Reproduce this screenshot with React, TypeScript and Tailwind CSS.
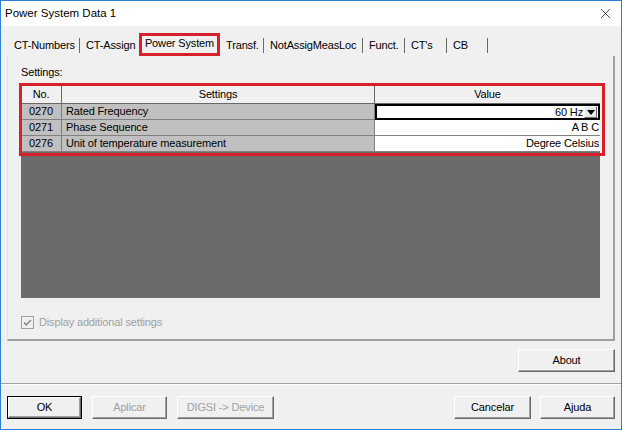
import { X } from 'lucide-react'

const tabs = [
  { label: 'CT-Numbers', w: 'w-[72px]' },
  { label: 'CT-Assign', w: 'w-[59px]', noSep: true },
  { label: 'Power System', w: 'w-[81px]', active: true },
  { label: 'Transf.', w: 'w-[44px]' },
  { label: 'NotAssigMeasLoc', w: 'w-[99px]' },
  { label: 'Funct.', w: 'w-[42px]' },
  { label: "CT's", w: 'w-[42px]' },
  { label: 'CB', w: 'w-[41px]' },
]

const rows = [
  { no: '0270', name: 'Rated Frequency', value: '60 Hz', dropdown: true },
  { no: '0271', name: 'Phase Sequence', value: 'A B C' },
  { no: '0276', name: 'Unit of temperature measurement', value: 'Degree Celsius' },
]

function Btn({ label, w, disabled, primary }: { label: string; w: string; disabled?: boolean; primary?: boolean }) {
  return (
    <div className={`${w} h-[23px] ${primary ? 'border border-black' : ''}`}>
      <div
        className={`flex h-full items-center justify-center border border-t-white border-l-white border-r-[#696969] border-b-[#696969] bg-[#f0f0f0] shadow-[inset_-1px_-1px_0_#a0a0a0] ${
          disabled ? 'text-[#a0a0a0]' : 'text-black'
        }`}
      >
        {label}
      </div>
    </div>
  )
}

export default function App() {
  return (
    <div className="flex h-[430px] w-[622px] flex-col border border-[#2d7fd6] bg-[#f0f0f0] font-['Liberation_Sans',Arial,sans-serif] text-[11px] tracking-[-0.15px] text-black">
      {/* Title bar */}
      <div className="flex h-[25px] shrink-0 items-center justify-between bg-white pl-[4px] pr-[7px]">
        <span className="text-[11.5px] tracking-normal">Power System Data 1</span>
        <X className="h-[17px] w-[17px]" strokeWidth={1} />
      </div>

      {/* Tabs */}
      <div className="mt-[7px] flex h-[23px] shrink-0 pl-[7px]">
        {tabs.map((t) =>
          t.active ? (
            <div key={t.label} className={`${t.w} flex items-center justify-center border-[3px] border-[#d6212b] pb-[2px]`}>
              {t.label}
            </div>
          ) : (
            <div key={t.label} className={`${t.w} flex items-center justify-between pl-[6px]`}>
              <span className="pt-[2px]">{t.label}</span>
              {!t.noSep && <span className="mt-[2px] h-[15px] w-px bg-[#696969]" />}
            </div>
          ),
        )}
      </div>

      {/* Tab panel */}
      <div className="mx-[6px] flex h-[285px] shrink-0 flex-col border-l border-l-[#e3e3e3] border-r-2 border-r-[#a0a0a0] border-b-2 border-b-[#a0a0a0] pl-[13px] pr-[13px]">
        <div className="mt-[10px] h-[13px] leading-[13px]">Settings:</div>

        {/* Grid */}
        <div className="relative mt-[7px] h-[212px] bg-[#6b6b6b]">
          <div className="flex h-[18px] bg-[#f0f0f0]">
            <div className="flex w-[41px] items-center justify-center border-r border-b border-[#696969]">No.</div>
            <div className="flex w-[313px] items-center justify-center border-r border-b border-[#696969]">Settings</div>
            <div className="flex flex-1 items-center justify-center border-b border-[#696969]">Value</div>
          </div>
          {rows.map((r) => (
            <div key={r.no} className="flex h-[16px]">
              <div className="flex w-[41px] items-center justify-center border-r border-b border-[#808080] bg-[#c0c0c0]">{r.no}</div>
              <div className="flex w-[313px] items-center border-r border-b border-[#808080] bg-[#c0c0c0] pl-[4px]">{r.name}</div>
              {r.dropdown ? (
                <div className="flex flex-1 items-center justify-end border-2 border-black bg-white pr-[1px]">
                  <span>{r.value}</span>
                  <span className="ml-[1px] flex h-[12px] w-[13px] items-center justify-center border border-t-white border-l-white border-r-[#696969] border-b-[#696969] bg-[#e8e8e8]">
                    <svg width="8" height="5" viewBox="0 0 8 5">
                      <path d="M0 0h8L4 5z" fill="black" />
                    </svg>
                  </span>
                </div>
              ) : (
                <div className="flex flex-1 items-center justify-end border-b border-[#808080] bg-white pr-[1px]">{r.value}</div>
              )}
            </div>
          ))}
          {/* annotation frame */}
          <div className="absolute top-[-3px] left-[-2px] right-[-5px] h-[73px] border-[3px] border-[#d6212b]" />
        </div>

        {/* Checkbox */}
        <div className="mt-[16px] flex items-center gap-[5px] text-[#a0a0a0]">
          <svg width="13" height="13" viewBox="0 0 13 13">
            <rect x="0.5" y="0.5" width="12" height="12" fill="#f0f0f0" stroke="#a0a0a0" />
            <path d="M3 6.5l2.3 2.3L10 4" fill="none" stroke="#8a8a8a" strokeWidth="1.6" />
          </svg>
          <span>Display additional settings</span>
        </div>
      </div>

      {/* About */}
      <div className="mt-[8px] flex shrink-0 justify-end pr-[6px]">
        <Btn label="About" w="w-[97px]" />
      </div>

      {/* Separator */}
      <div className="mt-[11px] h-[2px] shrink-0 border-t border-t-[#a0a0a0] border-b border-b-white" />

      {/* Bottom buttons */}
      <div className="mt-[11px] flex shrink-0 items-center px-[6px]">
        <div className="flex gap-[10px]">
          <Btn label="OK" w="w-[75px]" primary />
          <Btn label="Aplicar" w="w-[75px]" disabled />
          <Btn label="DIGSI -> Device" w="w-[97px]" disabled />
        </div>
        <div className="ml-auto flex gap-[9px]">
          <Btn label="Cancelar" w="w-[77px]" />
          <Btn label="Ajuda" w="w-[75px]" />
        </div>
      </div>
    </div>
  )
}
